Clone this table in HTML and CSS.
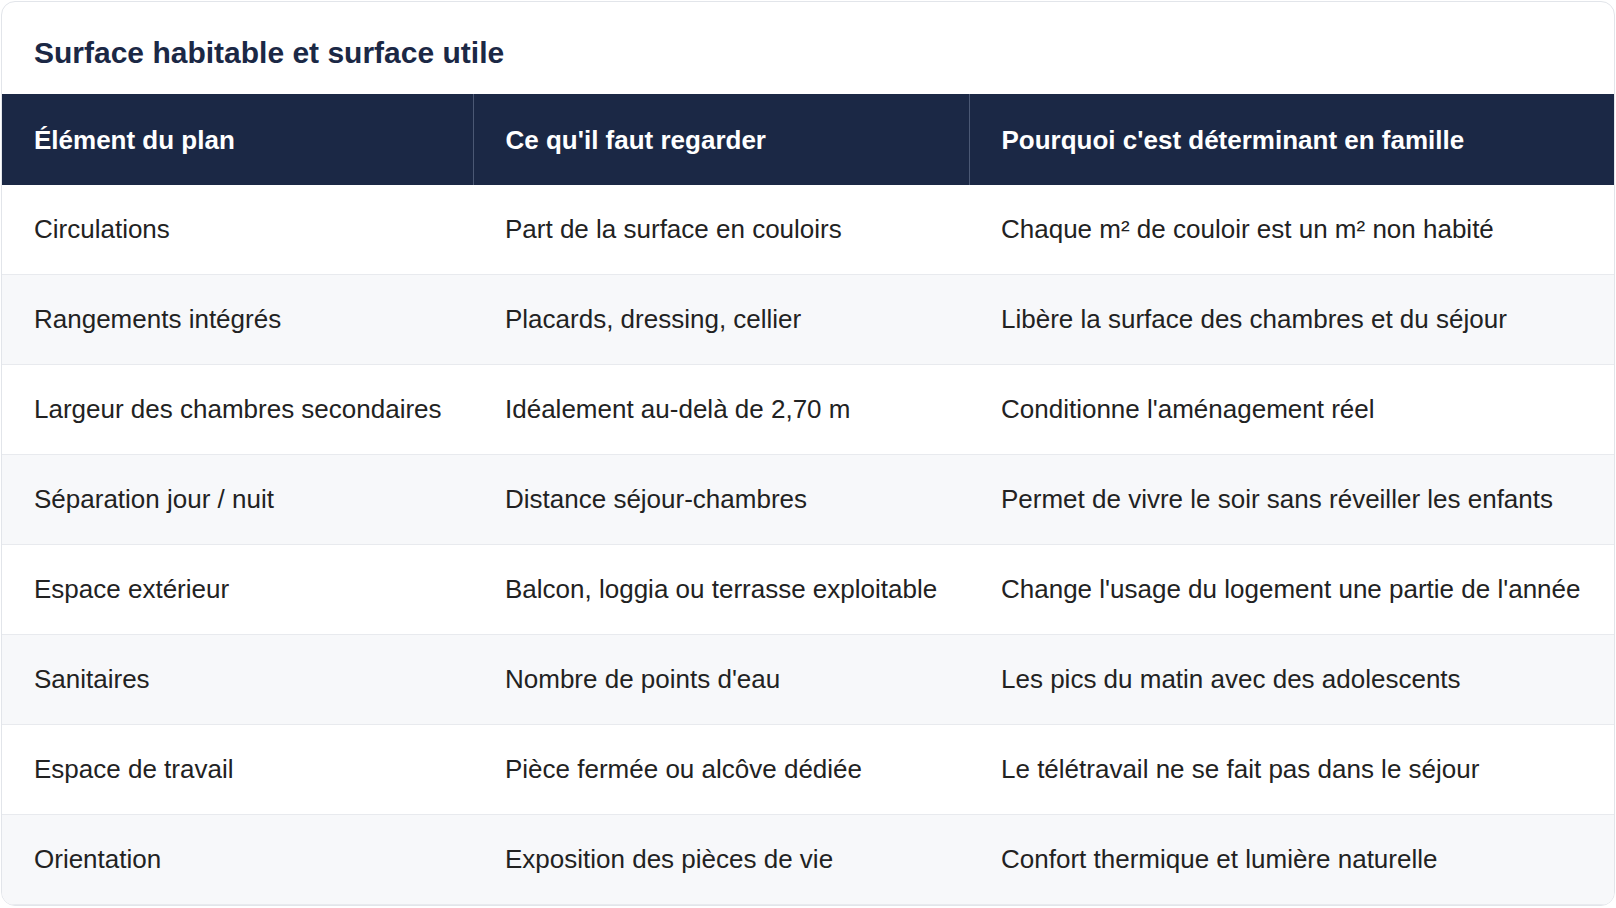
FILE: index.html
```html
<!DOCTYPE html>
<html lang="fr">
<head>
<meta charset="utf-8">
<title>Surface habitable et surface utile</title>
<link rel="stylesheet" href="styles.css">
</head>
<body>
<div class="page">
  <section class="card">
    <h2 class="card-title">Surface habitable et surface utile</h2>
    <table class="plan-table">
      <colgroup>
        <col class="col-a">
        <col class="col-b">
        <col class="col-c">
      </colgroup>
      <thead>
        <tr>
          <th>Élément du plan</th>
          <th>Ce qu'il faut regarder</th>
          <th>Pourquoi c'est déterminant en famille</th>
        </tr>
      </thead>
      <tbody>
        <tr><td>Circulations</td><td>Part de la surface en couloirs</td><td>Chaque m² de couloir est un m² non habité</td></tr>
        <tr><td>Rangements intégrés</td><td>Placards, dressing, cellier</td><td>Libère la surface des chambres et du séjour</td></tr>
        <tr><td>Largeur des chambres secondaires</td><td>Idéalement au-delà de 2,70 m</td><td>Conditionne l'aménagement réel</td></tr>
        <tr><td>Séparation jour / nuit</td><td>Distance séjour-chambres</td><td>Permet de vivre le soir sans réveiller les enfants</td></tr>
        <tr><td>Espace extérieur</td><td>Balcon, loggia ou terrasse exploitable</td><td>Change l'usage du logement une partie de l'année</td></tr>
        <tr><td>Sanitaires</td><td>Nombre de points d'eau</td><td>Les pics du matin avec des adolescents</td></tr>
        <tr><td>Espace de travail</td><td>Pièce fermée ou alcôve dédiée</td><td>Le télétravail ne se fait pas dans le séjour</td></tr>
        <tr><td>Orientation</td><td>Exposition des pièces de vie</td><td>Confort thermique et lumière naturelle</td></tr>
      </tbody>
    </table>
  </section>
</div>
</body>
</html>
```

FILE: styles.css
```css
* {
  box-sizing: border-box;
}

html, body {
  margin: 0;
  padding: 0;
  background: #ffffff;
}

body {
  font-family: "Liberation Sans", Arial, Helvetica, sans-serif;
  color: #222222;
}

.page {
  padding: 1px 1px 0 1px;
}

.card {
  width: 1614px;
  border: 1px solid #e2e5ea;
  border-radius: 14px;
  overflow: hidden;
  background: #ffffff;
}

.card-title {
  margin: 0;
  padding: 33px 32px 23px;
  font-size: 30px;
  line-height: 36px;
  font-weight: 700;
  color: #1b2845;
}

.plan-table {
  width: 100%;
  border-collapse: collapse;
  table-layout: fixed;
}

.col-a { width: 471px; }
.col-b { width: 496px; }
.col-c { width: auto; }

.plan-table th {
  background: #1b2845;
  color: #ffffff;
  font-size: 26px;
  font-weight: 700;
  line-height: 40px;
  text-align: left;
  padding: 26px 31px 25px 32px;
  border-right: 1px solid #4b5874;
}

.plan-table th:last-child {
  border-right: none;
}

.plan-table td {
  font-size: 26px;
  line-height: 39px;
  padding: 25px 31px 25px 32px;
  color: #222222;
  border-bottom: 1px solid #e8eaee;
  white-space: nowrap;
}

.plan-table tbody tr:nth-child(even) td {
  background: #f7f8fa;
}
```
